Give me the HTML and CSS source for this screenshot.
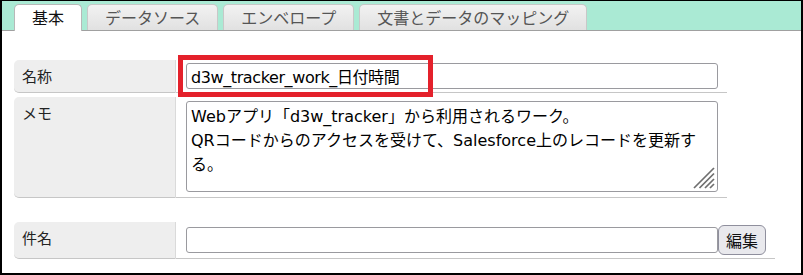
FILE: index.html
```html
<!DOCTYPE html>
<html lang="ja">
<head>
  <meta charset="UTF-8" />
  <title>ワーク設定</title>
  <link rel="stylesheet" href="styles.css">
</head>
<body>
  <div class="frame">
    <div class="tabs">
      <span class="tab active">基本</span>
      <span class="tab">データソース</span>
      <span class="tab">エンベロープ</span>
      <span class="tab">文書とデータのマッピング</span>
    </div>

    <div class="form">
      <div class="row">
        <div class="label">名称</div>
        <div class="field">
          <input type="text" class="text name" value="d3w_tracker_work_日付時間" />
        </div>
      </div>
      <div class="row">
        <div class="label">メモ</div>
        <div class="field memo">
          <textarea class="text area">Webアプリ「d3w_tracker」から利用されるワーク。
QRコードからのアクセスを受けて、Salesforce上のレコードを更新する。</textarea>
          <svg class="grip" width="22" height="22" viewBox="0 0 22 22">
            <line x1="21" y1="1" x2="1" y2="21" />
            <line x1="21" y1="6.5" x2="6.5" y2="21" />
            <line x1="21" y1="12" x2="12" y2="21" />
            <line x1="21" y1="17" x2="17" y2="21" />
          </svg>
        </div>
      </div>
      <div class="row subject">
        <div class="label">件名</div>
        <div class="field">
          <input type="text" class="text" value="" />
          <button class="edit">編集</button>
        </div>
      </div>
    </div>

    <div class="highlight"></div>
  </div>
</body>
</html>
```

FILE: styles.css
```css
body {
  margin: 0;
  padding: 0;
  background: #fff;
  font-family: "DejaVu Sans", "Noto Sans CJK JP", sans-serif;
  color: #222;
}
.frame {
  position: relative;
  width: 799px;
  height: 272px;
  border: 2px solid #000;
  border-top-width: 1px;
  overflow: hidden;
}
.tabs {
  background: #aaead4;
  height: 29px;
  border-bottom: 1px solid #a0a0a0;
  padding-left: 12px;
  display: flex;
  align-items: flex-end;
  gap: 5px;
}
.tab {
  font-family: "Noto Sans CJK JP", sans-serif;
  font-size: 16px;
  line-height: 25px;
  height: 25px;
  padding: 0 17px;
  color: #555;
  background: linear-gradient(#f2f2f2, #e1e1e1);
  border: 1px solid #c8c8c8;
  border-bottom: none;
  border-radius: 5px 5px 0 0;
}
.tab.active {
  background: #fff;
  color: #111;
  border-color: #b8b8b8;
  margin-bottom: -1px;
  height: 26px;
}
.form {
  padding: 29px 0 0 12px;
}
.row {
  display: flex;
  width: fit-content;
  margin-bottom: 4px;
}
.row.subject {
  margin-top: 24px;
}
.label {
  width: 153px;
  padding: 6px 0 0 8px;
  font-family: "Noto Sans CJK JP", sans-serif;
  font-size: 15px;
  line-height: 20px;
  color: #222;
  background: #eeeeee;
  border-right: 1px solid #dadada;
  border-bottom: 1px solid #c6c6c6;
  border-radius: 5px 0 0 5px;
}
.field {
  display: flex;
  align-items: center;
  padding: 3px 9px 3px 10px;
  border-bottom: 1px solid #c6c6c6;
}
.field.memo {
  position: relative;
  padding: 4px 9px 5px 10px;
}
.text {
  font-family: inherit;
  font-size: 16px;
  color: #000;
  width: 532px;
  height: 26px;
  box-sizing: border-box;
  padding: 0 4px;
  border: 1px solid #9a9a9f;
  border-radius: 3px;
  margin: 0;
}
.text.name {
  letter-spacing: -0.4px;
}
.text.area {
  height: 91px;
  line-height: 24px;
  padding: 3px 4px;
  resize: none;
}
.grip {
  position: absolute;
  right: 12px;
  bottom: 8px;
  stroke: #6f6f6f;
  stroke-width: 1.7;
}
.edit {
  font-family: "Noto Sans CJK JP", sans-serif;
  font-size: 16px;
  height: 30px;
  width: 48px;
  padding: 0;
  margin: 0;
  color: #111;
  background: #e9e9ed;
  border: 1px solid #8f8f9d;
  border-radius: 6px;
}
.highlight {
  position: absolute;
  left: 176px;
  top: 54px;
  width: 245px;
  height: 32px;
  border: 5px solid #e4212b;
}
```
